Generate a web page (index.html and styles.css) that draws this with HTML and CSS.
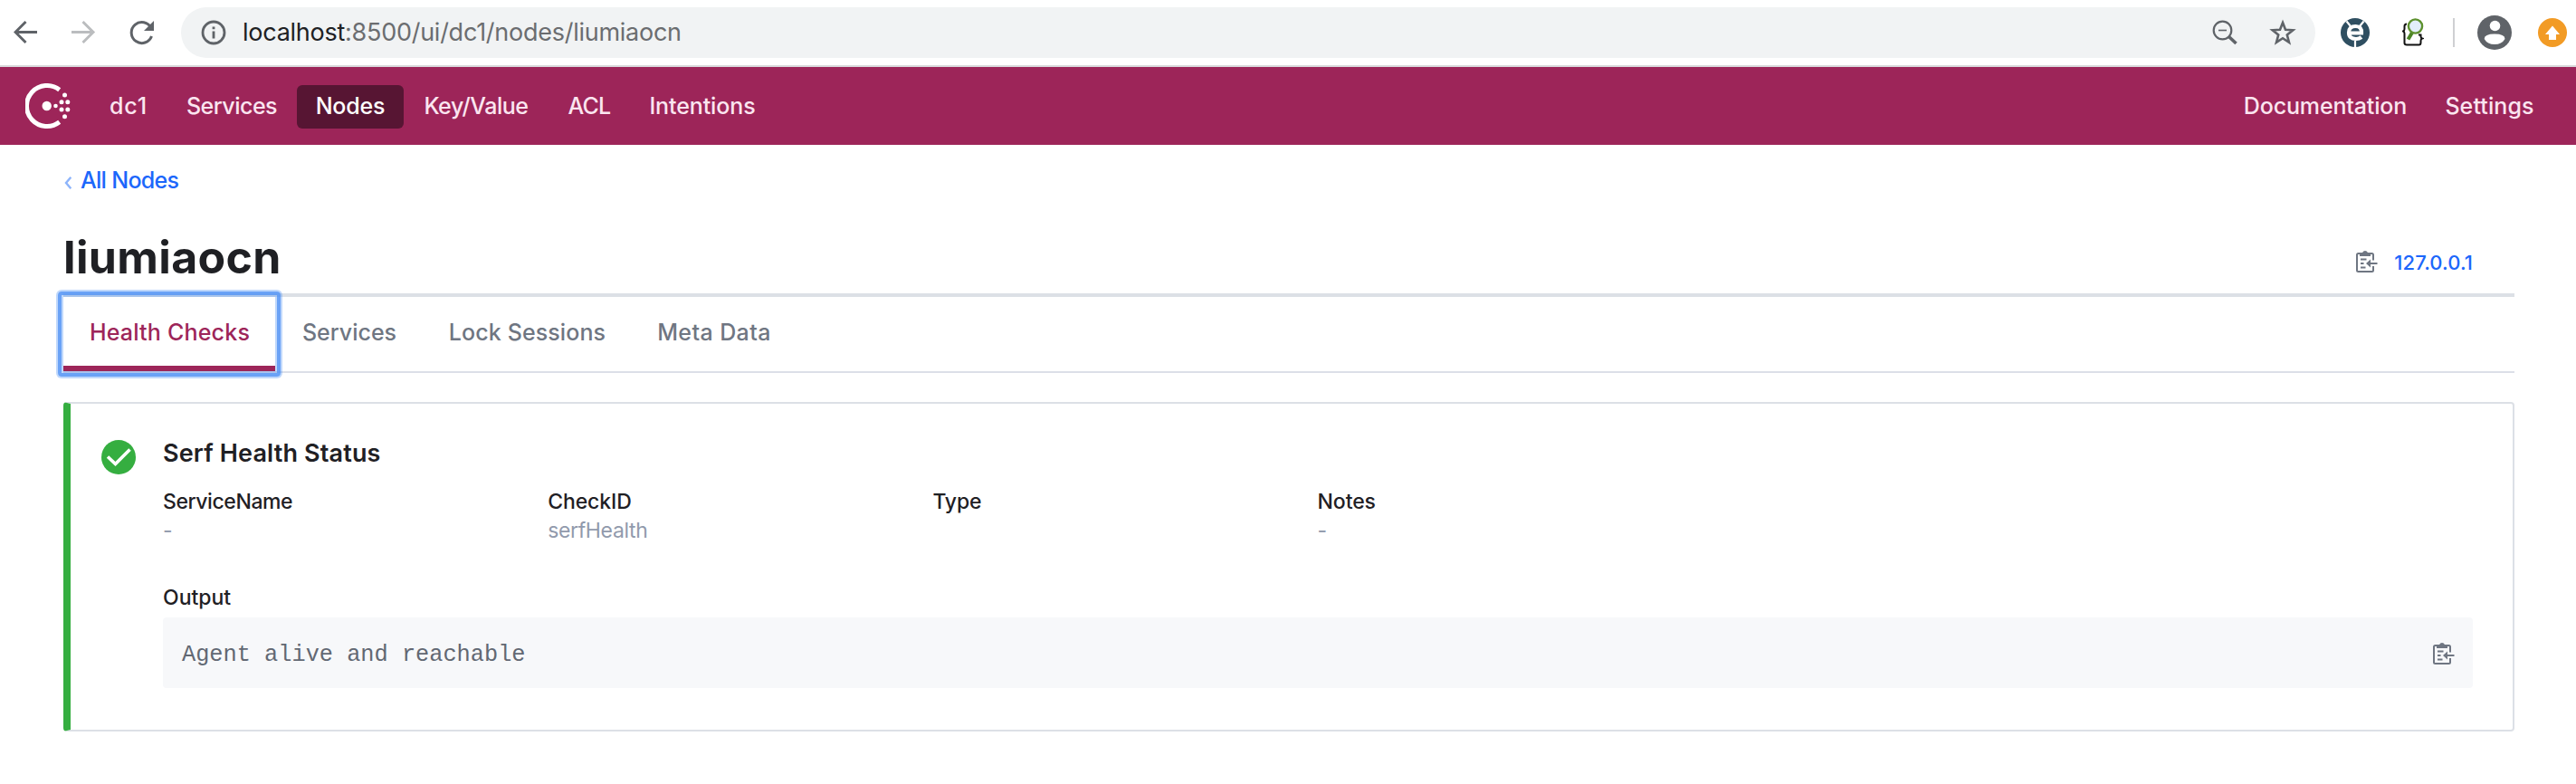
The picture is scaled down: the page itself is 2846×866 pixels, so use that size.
FILE: index.html
```html
<!DOCTYPE html>
<html lang="en">
<head>
<meta charset="utf-8">
<title>liumiaocn - Consul</title>
<link rel="stylesheet" href="styles.css">
</head>
<body>
<svg class="defs" width="0" height="0">
  <symbol id="copy" viewBox="0 0 24 25">
    <g fill="none" stroke="#6f7682" stroke-width="2">
      <path d="M19 10.5V4.500Q19 3 17.500 3H2.500Q1 3 1 4.500V21.500Q1 23 2.500 23H17.500Q19 23 19 21.500V17"/>
      <path d="M5 3.500V5H15V3.500M7.500 3Q10 -1 12.500 3"/>
      <path d="M5 9.500H11.500M5 14H8.500M5 18.500H10.500M14 14H23.500"/>
    </g>
    <path d="M11 14L16 9.500V18.500Z" fill="#6f7682"/>
  </symbol>
</svg>

<header class="toolbar">
  <div class="history">
    <svg width="28" height="28" viewBox="0 0 28 28" fill="none" stroke="#5f6368" stroke-width="3"><path d="M26 13.500H3M13.500 2L2 13.500L13.500 25"/></svg>
    <svg width="28" height="28" viewBox="0 0 28 28" fill="none" stroke="#bbbdbf" stroke-width="3"><path d="M0 13.500H24M12.500 2L24 13.500L12.500 25"/></svg>
    <svg width="28" height="28" viewBox="0 0 28 28"><path d="M24 9A11.500 11.500 0 1 0 24.500 18" fill="none" stroke="#5f6368" stroke-width="3"/><path d="M27 1V12H16Z" fill="#5f6368"/></svg>
  </div>
  <div class="address">
    <svg class="info" width="28" height="28" viewBox="0 0 28 28"><circle cx="14" cy="14" r="12" fill="none" stroke="#5f6368" stroke-width="2.800"/><path d="M14 12.500V20.500M14 7.500V10.200" stroke="#5f6368" stroke-width="2.800"/></svg>
    <span class="url"><span class="host">localhost</span>:8500/ui/dc1/nodes/liumiaocn</span>
    <svg class="zoom" width="28" height="28" viewBox="0 0 28 28" fill="none" stroke="#5f6368"><circle cx="11.500" cy="11.500" r="9.800" stroke-width="2.200"/><path d="M7 11.500H16" stroke-width="1.600"/><path d="M18.500 18.500L26.500 26" stroke-width="3.600"/></svg>
    <svg class="star" width="30" height="30" viewBox="0 0 30 30"><path d="M15 4L18 11.800L26.300 12.300L19.800 17.500L22 25.800L15 21.200L8 25.800L10.200 17.500L3.700 12.300L12 11.800Z" fill="none" stroke="#5f6368" stroke-width="2.600"/></svg>
  </div>
  <div class="extensions">
    <svg width="32" height="32" viewBox="0 0 32 32"><circle cx="16" cy="16" r="16" fill="#2f4f61"/><path d="M6.500 3.500L11 9M25.500 3.500L21 9M16 25V32" stroke="#fff" stroke-width="2.200"/><path d="M9.500 16.500H23Q23.500 9 16.500 9Q9 9 9 16Q9 23 17 23Q20.500 23 23 21" fill="none" stroke="#fff" stroke-width="4.200"/></svg>
    <svg class="finder" width="24" height="32" viewBox="0 0 24 32"><path d="M5 6.500Q2.500 6.500 2.500 9V12Q2.500 14 1 14.500Q2.500 15 2.500 17V27.500Q2.500 29.500 5 29.500H18.500Q20.500 29.500 20.500 27V25Q20.500 23 22 22.500Q20.500 22 20.500 20V18.500H18" fill="none" stroke="#111" stroke-width="2"/><path d="M11 16L6.500 23.500" stroke="#4b8426" stroke-width="4"/><circle cx="14.500" cy="9" r="7.600" fill="#e2eefb" stroke="#5e912f" stroke-width="2.400"/></svg>
    <span class="divider"></span>
    <svg class="avatar" width="38" height="38" viewBox="0 0 38 38"><circle cx="19" cy="19" r="19" fill="#5f6368"/><circle cx="19.500" cy="11.500" r="5.800" fill="#fff"/><path d="M7.700 26Q7.700 20.500 19 20.500Q30.500 20.500 30.500 26Q27 32 19 32Q11 32 7.700 26Z" fill="#fff"/></svg>
    <svg class="update" width="32" height="32" viewBox="0 0 32 32"><circle cx="16" cy="16" r="16" fill="#f29b25"/><path d="M16 8.500L24 18H20V24H12V18H8Z" fill="#fff"/></svg>
  </div>
</header>

<nav class="navbar">
  <svg class="logo" width="52" height="52" viewBox="0 0 52 52" fill="#fff"><path d="M37.700 7.200A22.500 22.500 0 1 0 37.700 42.800" fill="none" stroke="#fff" stroke-width="5"/><circle cx="23.700" cy="25" r="5.200"/><circle cx="33.500" cy="25" r="2.300"/><circle cx="43.500" cy="13" r="2.500"/><circle cx="40" cy="20.700" r="2.500"/><circle cx="46.800" cy="20.700" r="2.500"/><circle cx="40" cy="29" r="2.500"/><circle cx="46.800" cy="29" r="2.500"/><circle cx="43.500" cy="36.700" r="2.500"/></svg>
  <a class="nav-item dc">dc1</a>
  <a class="nav-item services">Services</a>
  <a class="nav-item nodes">Nodes</a>
  <a class="nav-item kv">Key/Value</a>
  <a class="nav-item acl">ACL</a>
  <a class="nav-item intentions">Intentions</a>
  <a class="nav-item docs">Documentation</a>
  <a class="nav-item settings">Settings</a>
</nav>

<main class="page">
  <a class="breadcrumb"><svg width="9" height="14" viewBox="0 0 9 14"><path d="M7.300 .8L2 7L7.300 13.200" fill="none" stroke="#8db4fb" stroke-width="2.400"/></svg><span>All Nodes</span></a>
  <div class="heading">
    <h1>liumiaocn</h1>
    <div class="ip"><svg width="24" height="25"><use href="#copy"/></svg><span>127.0.0.1</span></div>
  </div>
  <div class="tabs">
    <a class="tab health active">Health Checks</a>
    <a class="tab tab-services">Services</a>
    <a class="tab locks">Lock Sessions</a>
    <a class="tab meta">Meta Data</a>
  </div>
  <section class="card">
    <svg class="status" width="38" height="38" viewBox="0 0 38 38"><circle cx="19" cy="19" r="19" fill="#35ae40"/><path d="M7 18.500L15.500 26.500L31.500 10.500" fill="none" stroke="#fff" stroke-width="3.600"/></svg>
    <div class="details">
      <h2>Serf Health Status</h2>
      <dl class="facts">
        <div><dt class="f-name">ServiceName</dt><dd>-</dd></div>
        <div><dt>CheckID</dt><dd>serfHealth</dd></div>
        <div><dt>Type</dt><dd></dd></div>
        <div><dt>Notes</dt><dd>-</dd></div>
      </dl>
      <div class="output-label">Output</div>
      <div class="output"><code>Agent alive and reachable</code><svg width="24" height="25"><use href="#copy"/></svg></div>
    </div>
  </section>
</main>
</body>
</html>
```
FILE: styles.css
```css
* { box-sizing: border-box; }
body { margin: 0; background: #fff; color: #1f2024; font-family: "Inter", "Liberation Sans", sans-serif; }
svg { display: block; flex: none; }
.defs { display: none; }

.toolbar { display: flex; align-items: center; height: 74px; border-bottom: 2px solid #d9dadc; }
.history { display: flex; gap: 36px; width: 200px; padding-left: 15px; }
.address { display: flex; align-items: center; width: 2358px; height: 56px; border-radius: 28px; background: #f1f3f4; padding: 0 21px 0 22px; }
.url { margin-left: 18px; font-size: 27px; line-height: 56px; letter-spacing: -.26px; color: #6b6d70; }
.host { color: #202124; }
.zoom { margin-left: auto; }
.star { margin-left: 35px; }
.extensions { display: flex; align-items: center; padding-left: 28px; }
.finder { margin-left: 36px; }
.divider { width: 2px; height: 32px; background: #cfd0d2; margin-left: 32px; }
.avatar { margin-left: 25px; }
.update { margin-left: 29px; }

.navbar { display: flex; align-items: center; height: 86px; padding: 2px 25px 0 28px; background: #9d2559; }
.logo { margin-right: 19px; }
.nav-item { height: 48px; padding-bottom: 2px; border-radius: 6px; font-size: 25px; font-weight: 500; line-height: 46px; text-align: center; color: #fbe5f0; white-space: nowrap; }
.dc { width: 85px; padding-left: 1px; letter-spacing: .8px; }
.services { width: 144px; letter-spacing: -.5px; }
.nodes { width: 118px; letter-spacing: -.18px; background: #571533; color: #fff; }
.kv { width: 160px; letter-spacing: -.45px; }
.acl { width: 90px; letter-spacing: -.8px; }
.intentions { width: 160px; letter-spacing: -.1px; }
.docs { width: 222px; margin-left: auto; letter-spacing: -.15px; }
.settings { width: 141px; letter-spacing: .1px; }

.page { padding: 24px 68px 0 70px; }
.breadcrumb { display: flex; align-items: center; height: 30px; gap: 9px; font-size: 25px; font-weight: 500; line-height: 30px; letter-spacing: -.7px; color: #1c67fb; }
.breadcrumb svg { margin: 5px 0 0 1px; }
.heading { display: flex; justify-content: space-between; height: 84px; margin-top: 30px; padding-top: 10px; border-bottom: 4px solid #dce0e6; }
.heading h1 { margin: 0; font-size: 50px; font-weight: 700; line-height: 60px; letter-spacing: .35px; }
.ip { display: flex; height: 32px; margin: 20px 46px 0 0; gap: 18px; font-size: 22px; font-weight: 500; line-height: 32px; letter-spacing: .1px; color: #1c67fb; }
.ip svg { margin-top: 3px; }

.tabs { display: flex; height: 84px; border-bottom: 2px solid #dcdfe8; }
.tab { position: relative; height: 82px; padding-top: 2px; border-bottom: 6px solid transparent; font-size: 25px; font-weight: 500; line-height: 74px; text-align: center; color: #6f7682; }
.active { border-bottom-color: #9d2559; color: #9d2559; }
.active::after { content: ""; position: absolute; inset: -6px -6px -12px; border: 4px solid rgba(80, 146, 244, .85); border-radius: 4px; box-shadow: 0 0 0 2px rgba(80, 146, 244, .36), inset 0 0 0 2px rgba(80, 146, 244, .36); }
.health { width: 234px; padding-left: 1px; letter-spacing: .2px; }
.tab-services { width: 164px; }
.locks { width: 229px; letter-spacing: .1px; }
.meta { width: 184px; letter-spacing: .4px; }

.card { display: flex; height: 364px; margin-top: 32px; padding: 34px 44px 0 34px; border: 2px solid #dce0e6; border-left: 8px solid #35ae40; border-radius: 4px; }
.status { margin-top: 6px; }
.details { flex: 1; padding-left: 30px; }
.details h2 { margin: 0; padding-top: 1px; font-size: 27px; font-weight: 600; line-height: 39px; letter-spacing: .15px; }
.facts { display: grid; grid-template-columns: repeat(4, 425.2px); margin: 18px 0 0; font-size: 23px; line-height: 32px; }
.facts dt { height: 32px; font-weight: 500; letter-spacing: -.1px; }
.facts .f-name { letter-spacing: -.43px; }
.facts dd { height: 32px; margin: 0; color: #919aac; letter-spacing: -.35px; }
.output-label { margin: 42px 0 6px; font-size: 23px; font-weight: 500; line-height: 32px; }
.output { display: flex; align-items: center; justify-content: space-between; height: 78px; padding: 2px 20px 0 21px; border-radius: 4px; background: #f7f8fa; }
.output code { padding-top: 4px; font-family: "Liberation Mono", monospace; font-size: 25.3px; line-height: 40px; color: #626873; }
```
